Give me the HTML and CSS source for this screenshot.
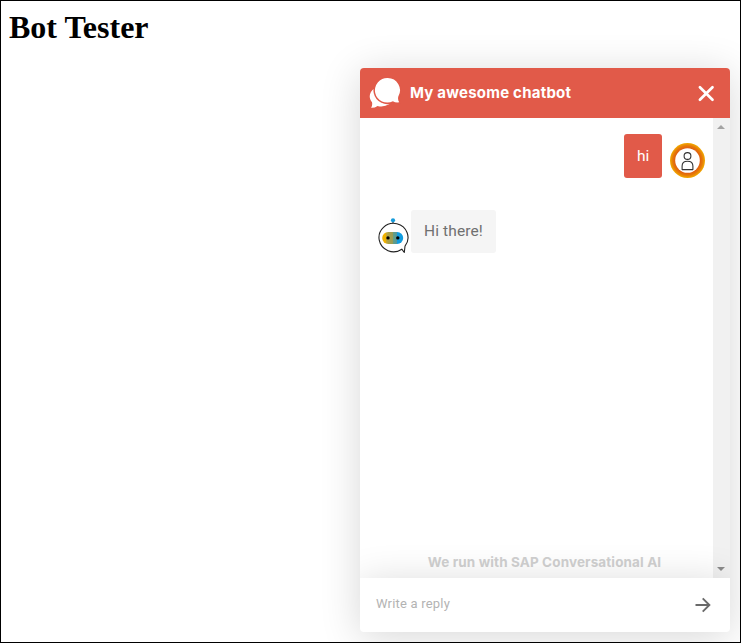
FILE: index.html
```html
<!DOCTYPE html>
<html lang="en">
<head>
<meta charset="utf-8">
<title>Bot Tester</title>
<link rel="stylesheet" href="styles.css">
</head>
<body>
<h1>Bot Tester</h1>
<section class="chat">
  <header class="chat-header">
    <svg class="logo" width="32" height="32" viewBox="0 0 32 32" fill="#fff">
      <path d="M5.500 11.400L20.500 27Q14.500 30.600 8.500 28.900Q5.500 31 2.100 30.700Q3.700 28.300 3 25.200C-1 20.500.5 14.500 5.500 11.400Z"/>
      <path d="M18.700 1a12.300 12.300 0 0 1 10.600 18.500q-.8 3 .9 5.800q-3.600.6-6.300-1.100A12.300 12.300 0 1 1 18.700 1Z" stroke="#e15a49" stroke-width="3" paint-order="stroke"/>
    </svg>
    <span class="title">My awesome chatbot</span>
    <svg class="close" width="18" height="18" viewBox="0 0 18 18" fill="none" stroke="#fff" stroke-width="2.700" stroke-linecap="round"><path d="M2.900 2.200l12.600 12.600M15.500 2.200l-12.600 12.600"/></svg>
  </header>
  <div class="body">
    <div class="messages">
      <div class="row user">
        <div class="bubble">hi</div>
        <svg class="avatar" width="36" height="36" viewBox="0 0 36 36">
          <defs><radialGradient id="ring"><stop offset=".68" stop-color="#e05a12"/><stop offset=".84" stop-color="#e67808"/><stop offset="1" stop-color="#f1aa00"/></radialGradient></defs>
          <circle cx="17.500" cy="18.500" r="17.500" fill="url(#ring)"/>
          <circle cx="17.500" cy="18.500" r="12.300" fill="#fff"/>
          <g fill="none" stroke="#333" stroke-width="1.100"><circle cx="17.500" cy="14" r="3.400"/><path d="M12.100 27.600v-3.500q0-4.800 5.400-4.800t5.400 4.800v3.500Z" stroke-linejoin="round"/></g>
        </svg>
      </div>
      <div class="row bot">
        <svg class="avatar" width="32" height="36" viewBox="0 0 32 36">
          <defs><linearGradient id="face"><stop offset=".17" stop-color="#eeb000"/><stop offset=".17" stop-color="#cba62b"/><stop offset=".3" stop-color="#aaa04a"/><stop offset=".5" stop-color="#999b55"/><stop offset=".5" stop-color="#65a080"/><stop offset=".72" stop-color="#5296a0"/><stop offset=".72" stop-color="#109ce0"/></linearGradient></defs>
          <path d="M16 3v4" stroke="#222"/><circle cx="16" cy="2.300" r="2.100" fill="#159bdb"/>
          <path d="M24.800 31.200A14.500 14.200 0 1 1 28 28.200L27.300 34.500Z" fill="#fff" stroke="#222" stroke-width="1.100" stroke-linejoin="round"/>
          <rect x="5.200" y="14" width="21" height="12" rx="6" fill="url(#face)"/>
          <circle cx="11" cy="19.900" r="1.700"/><circle cx="20.800" cy="19.900" r="1.700"/>
        </svg>
        <div class="bubble">Hi there!</div>
      </div>
      <div class="credit">We run with SAP Conversational AI</div>
    </div>
    <div class="scrollbar">
      <svg width="8" height="4" viewBox="0 0 8 4"><path d="M0 4l4-4 4 4Z" fill="#a3a3a3"/></svg>
      <svg width="8" height="4" viewBox="0 0 8 4"><path d="M0 0l4 4 4-4Z" fill="#8b8b8b"/></svg>
    </div>
  </div>
  <footer class="reply">
    <span>Write a reply</span>
    <svg width="16" height="16" viewBox="0 0 16 16" fill="none" stroke="#6a6a6a" stroke-width="1.900"><path d="M.5 8h14M7.700 1.300L14.400 8l-6.700 6.700"/></svg>
  </footer>
</section>
</body>
</html>
```
FILE: styles.css
```css
* { box-sizing: border-box; }
body {
  margin: 0;
  width: 741px;
  height: 643px;
  border: 1px solid #000;
  overflow: hidden;
  background: #fff;
  font-family: Roboto, "Noto Sans", sans-serif;
}
h1 {
  margin: 0;
  padding: 8px 8px 0;
  height: 67px;
  font: bold 32px/37px "Liberation Serif", serif;
}
.chat {
  width: 370px;
  height: 564px;
  margin: 0 10px 0 auto;
  display: flex;
  flex-direction: column;
  border-radius: 4px;
  overflow: hidden;
  background: #fff;
  box-shadow: 0 5px 40px rgba(0, 0, 0, .16);
}
.chat-header {
  height: 50px;
  flex: none;
  display: flex;
  align-items: center;
  padding: 0 15px 0 9px;
  background: #e15a49;
  color: #fff;
}
.title {
  margin-left: 9px;
  font: bold 15px/20px Inter, sans-serif;
  letter-spacing: .22px;
}
.close { margin: 1px 0 0 auto; }
.body { display: flex; height: 460px; flex: none; }
.messages {
  flex: 1;
  display: flex;
  flex-direction: column;
  padding: 16px 7px 7px 17px;
}
.row { display: flex; align-items: flex-end; }
.user { justify-content: flex-end; gap: 8px; height: 44px; }
.bubble {
  padding: 0 13px;
  border-radius: 3px;
  font-size: 15.500px;
  line-height: 43px;
}
.user .bubble { width: 38px; height: 44px; line-height: 45px; background: #e15a49; color: #fff; }
.bot { margin-top: 32px; gap: 2px; height: 43px; }
.bot .avatar { margin-bottom: -1px; }
.bot .bubble { width: 85px; height: 43px; line-height: 42px; letter-spacing: .12px; background: #f5f5f5; color: #707070; white-space: nowrap; }
.credit {
  margin-top: auto;
  padding-left: 6px;
  text-align: center;
  font: bold 13.500px/18px Inter, sans-serif;
  letter-spacing: .12px;
  white-space: nowrap;
  color: #d0d0d0;
}
.scrollbar {
  width: 17px;
  padding: 7px 5px 7px 4px;
  display: flex;
  flex-direction: column;
  justify-content: space-between;
  align-items: center;
  background: #f1f1f1;
}
.reply {
  position: relative;
  flex: 1;
  display: flex;
  align-items: center;
  justify-content: space-between;
  padding: 0 19px 0 16px;
  background: #fff;
  box-shadow: 0 5px 40px rgba(0, 0, 0, .16);
  color: #b3b3b3;
  font-size: 13px;
  letter-spacing: .2px;
}
.reply span { margin-bottom: 3px; }
```
